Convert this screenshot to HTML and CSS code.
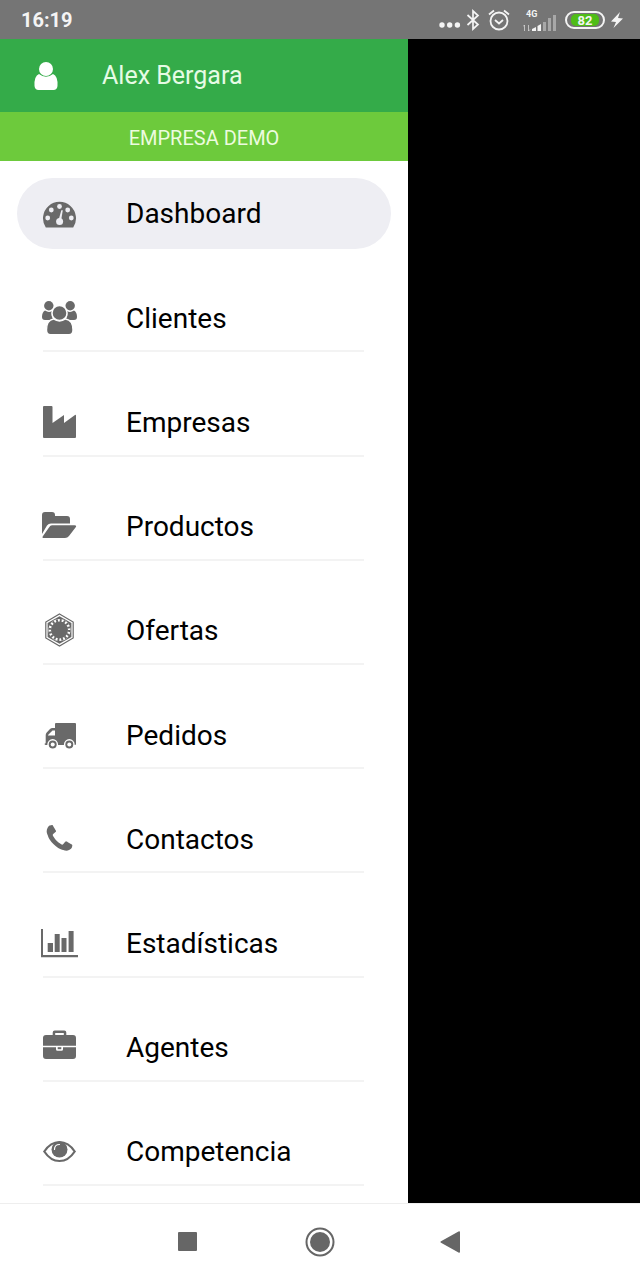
FILE: index.html
```html
<!DOCTYPE html>
<html lang="es">
<head>
<meta charset="utf-8">
<meta name="viewport" content="width=device-width, initial-scale=1">
<title>Menú</title>
<link rel="stylesheet" href="styles.css">
</head>
<body>
<header class="status">
  <time class="clock">16:19</time>
  <div class="status-icons">
    <svg width="22" height="24" viewBox="0 0 22 24" fill="currentColor"><circle cx="3" cy="17" r="2.700"/><circle cx="10.700" cy="17" r="2.700"/><circle cx="18.400" cy="17" r="2.700"/></svg>
    <svg class="ico-bluetooth" width="14" height="24" viewBox="0 0 14 24" fill="none" stroke="currentColor" stroke-width="1.700"><path d="M1.500 7 12 16.500 7 21V3l5 4.500L1.500 17"/></svg>
    <svg class="ico-alarm" width="22" height="24" viewBox="0 0 22 24" fill="none" stroke="currentColor" stroke-width="1.800"><circle cx="11" cy="13" r="8.500"/><path d="M7 12l4 3.500 4-3.500M1 6.500 6 2.500M21 6.500 16 2.500"/></svg>
    <div class="signal">
      <span class="network">4G</span>
      <svg width="34" height="18" viewBox="0 0 34 18" fill="currentColor"><path d="M1.500 17v-6M0 12.500 1.500 11M5.500 11v6M5.500 17 7 15.500" fill="none" stroke="currentColor" opacity=".6"/><path d="M9 17v-2l4-2v4zM14.500 12l3.500-2v7h-3.500z"/><path opacity=".4" d="M20 8h3v9h-3zM25 4h3v13h-3zM30 1h3v16h-3z"/></svg>
    </div>
    <span class="battery"><span class="battery-level">82</span></span>
    <svg width="14" height="18" viewBox="0 0 14 18" fill="currentColor"><path d="M10 1 1 10.500 6 11 3.500 17 13 7.500 8 7z"/></svg>
  </div>
</header>

<main class="screen">
  <aside class="drawer">
    <div class="user">
      <svg width="24" height="30" viewBox="0 0 24 30" fill="currentColor"><circle cx="12" cy="8" r="7"/><path d="M5 13Q0 15 0.500 25q.5 4 4 4h15q3.500 0 4-4Q24 15 19 13q-7 5.500-14 0z"/></svg>
      <span class="user-name">Alex Bergara</span>
    </div>
    <div class="company">EMPRESA DEMO</div>
    <nav class="menu">
      <a class="item active" href="#dashboard"><span class="row">
        <svg class="icon" viewBox="0 0 40 40"><path d="M5.800 33.500A16.500 16.500 0 1 1 33.200 33.500z"/><g class="cut"><circle cx="19.500" cy="12.500" r="2.400"/><circle cx="11.300" cy="16" r="2.400"/><circle cx="27.700" cy="16" r="2.400"/><circle cx="7.700" cy="24" r="2.400"/><circle cx="31.300" cy="24" r="2.400"/><circle cx="19.600" cy="27.500" r="3.500"/><path d="M18.600 26 21.300 16.200h1.500L21 27z"/></g></svg>
        <span class="label">Dashboard</span></span></a>
      <a class="item" href="#clientes"><span class="row">
        <svg class="icon" viewBox="0 0 40 40"><circle cx="8.800" cy="6.800" r="4.700"/><circle cx="30.200" cy="6.800" r="4.700"/><path d="M5 11.500q3.700 2.500 7 .5-1.500 6 2 9H5q-3 0-3-3 0-5 3-6.500zM34 11.500q-3.700 2.500-7 .5 1.500 6-2 9h9q3 0 3-3 0-5-3-6.500z"/><g class="halo"><circle cx="19.500" cy="14" r="7.500"/><path d="M13.500 20q6 4 12 0 7.500 1 7.500 11 0 4.800-4 4.800H10.500q-4 0-4-4.800 0-10 7-11z"/></g></svg>
        <span class="label">Clientes</span></span></a>
      <a class="item" href="#empresas"><span class="row">
        <svg class="icon" viewBox="0 0 40 40"><path d="M4 3h7.500q1 0 1 1v16L24 12v8l11-8q1-.5 1 .8V34q0 1-1 1H4q-1 0-1-1V4q0-1 1-1z"/></svg>
        <span class="label">Empresas</span></span></a>
      <a class="item" href="#productos"><span class="row">
        <svg class="icon" viewBox="0 0 40 40"><path d="M2 27V8q0-3 3-3h7q3 0 3 3v1h12q3 0 3 3v4.500H11q-2.500 0-4 2z"/><path d="M12 18.300h22.500q2.500 0 1.200 2L29 29q-1.500 2-4 2H4q-2.500 0-1-2l6-8.500q1.300-2.200 3-2.200z"/></svg>
        <span class="label">Productos</span></span></a>
      <a class="item" href="#ofertas"><span class="row">
        <svg class="icon" viewBox="0 0 40 40"><path class="line" d="M19.500 3 33.200 11v16L19.500 35 5.800 27V11z"/><path d="M19.500 5.300 31.400 12v14L19.500 32.800 7.600 26V12z"/><circle class="sun-gap" cx="19.500" cy="19" r="11"/><circle class="sun-rays" cx="19.500" cy="19" r="9.500"/><circle cx="19.500" cy="19" r="8.500"/></svg>
        <span class="label">Ofertas</span></span></a>
      <a class="item" href="#pedidos"><span class="row">
        <svg class="icon" viewBox="0 0 40 40"><path fill-rule="evenodd" d="M16 7h19q1 0 1 1v20q0 1-1 1H6q-1.500 0-1.500-1.200 1.200 0 1.200-1.300V19q0-1.500 1-2.500L10 13q1-1 2.500-1H15V8q0-1 1-1zM8 19.500h7v-5h-2.500L8 19z"/><g class="halo"><circle cx="12.700" cy="28.500" r="4.700"/><circle cx="29.300" cy="28.500" r="4.700"/></g><g class="cut"><circle cx="12.700" cy="28.500" r="2"/><circle cx="29.300" cy="28.500" r="2"/></g></svg>
        <span class="label">Pedidos</span></span></a>
      <a class="item" href="#contactos"><span class="row">
        <svg class="icon" viewBox="0 0 40 40"><path transform="translate(3.200 2.700) scale(.0182)" d="M1600 1240q0 27-10 70.500t-21 68.500q-21 50-122 106-94 51-186 51-27 0-53-3.500t-57.500-12.500-47-14.500-55.500-20.500-49-18q-98-35-175-83-127-79-264-216t-216-264q-48-77-83-175-3-9-18-49t-20.500-55.500-14.500-47-12.500-57.500-3.500-53q0-92 51-186 56-101 106-122 25-11 68.500-21t70.500-10q14 0 21 3 18 6 53 76 11 19 30 54t35 63.500 31 53.500q3 4 17.500 25t21.500 35.500 7 28.500q0 20-28.500 50t-62 55-62 53-28.500 46q0 9 5 22.500t8.500 20.500 14 24 11.500 19q76 137 174 235t235 174q2 1 19 11.500t24 14 20.500 8.500 22.500 5q18 0 46-28.500t53-62 55-62 50-28.500q14 0 28.500 7t35.500 21.500 25 17.500q25 15 53.500 31t63.500 35 54 30q70 35 76 53 3 7 3 21z"/></svg>
        <span class="label">Contactos</span></span></a>
      <a class="item" href="#estadisticas"><span class="row">
        <svg class="icon" viewBox="0 0 40 40"><path d="M1 5h2v26h35v2.200H1zM7.700 19H13v9H7.700zM14.700 10h5v18h-5zM21.500 14h5v14h-5zM28.600 7h5v21h-5z"/></svg>
        <span class="label">Estadísticas</span></span></a>
      <a class="item" href="#agentes"><span class="row">
        <svg class="icon" viewBox="0 0 40 40"><path d="M12.700 7V4.500q0-2 2-2h9.600q2 0 2 2V7H33q3 0 3 3v7.700H3V10q0-3 3-3zM15.200 7h8.600V5h-8.600z"/><path d="M3 19.200h13v2q0 1.500 1.500 1.500h4q1.500 0 1.500-1.500v-2h13V28q0 3-3 3H6q-3 0-3-3z"/><path d="M17.700 19.200h3.600v2h-3.600z"/></svg>
        <span class="label">Agentes</span></span></a>
      <a class="item" href="#competencia"><span class="row">
        <svg class="icon" viewBox="0 0 40 40"><path class="eye" d="M4.300 19.500Q10.500 10 19.500 10t15.200 9.500Q28.500 29 19.500 29T4.300 19.500z"/><circle cx="19.500" cy="17.500" r="8"/><path class="glint" d="M14.500 17.500q0-5 5-5"/></svg>
        <span class="label">Competencia</span></span></a>
    </nav>
  </aside>
</main>

<footer class="system-nav">
  <button class="key" type="button" aria-label="Recientes"><svg width="32" height="32" viewBox="0 0 32 32" fill="currentColor"><rect x="5" y="6" width="19" height="19" rx="1"/></svg></button>
  <button class="key" type="button" aria-label="Inicio"><svg width="32" height="32" viewBox="0 0 32 32" fill="currentColor"><circle cx="16" cy="16" r="10"/><circle cx="16" cy="16" r="13.500" fill="none" stroke="currentColor" stroke-width="2"/></svg></button>
  <button class="key" type="button" aria-label="Atrás"><svg width="32" height="32" viewBox="0 0 32 32" fill="currentColor"><path d="M6 15.200 23.500 5.500q1.500-.7 1.500 1v19q0 1.700-1.500 1L6 16.800q-1.500-.8 0-1.600z"/></svg></button>
</footer>
</body>
</html>
```
FILE: styles.css
```css
* { box-sizing: border-box; }

body {
  margin: 0;
  min-height: 100vh;
  display: flex;
  flex-direction: column;
  background: #000;
  color: #000;
  font-family: Roboto, "Noto Sans", sans-serif;
}

svg { display: block; flex: none; }

.status {
  display: flex;
  align-items: center;
  justify-content: space-between;
  height: 39px;
  padding: 0 16px 0 21px;
  background: #757575;
  color: #f4f4f4;
}

.clock { font-size: 20px; font-weight: 700; line-height: 24px; }

.status-icons { display: flex; align-items: center; gap: 5px; }

.ico-bluetooth { margin-right: 3px; }

.ico-alarm { margin-right: 8px; }

.signal { display: flex; flex-direction: column; height: 24px; margin-right: 3px; }

.network {
  height: 6px;
  padding-left: 3px;
  font-size: 9px;
  font-weight: 700;
  line-height: 12px;
}

.battery {
  width: 40px;
  height: 18px;
  padding: 1px 4px;
  border: 2px solid #f4f4f4;
  border-radius: 9px;
}

.battery-level {
  display: block;
  height: 12px;
  border-radius: 5px;
  background: #4fbd17;
  font-size: 13px;
  font-weight: 700;
  line-height: 13px;
  text-align: center;
}

.screen { flex: 1; display: flex; background: #000; }

.drawer {
  display: flex;
  flex-direction: column;
  width: 63.75%;
  background: #fff;
}

.user {
  display: flex;
  align-items: center;
  gap: 44px;
  height: 73px;
  padding: 1px 34px 0;
  background: #34ab49;
  color: #fff;
}

.user-name { color: #e6fbe5; font-size: 25px; line-height: 32px; }

.company {
  height: 49px;
  background: #6dca3c;
  color: #ecfbdf;
  font-size: 20px;
  line-height: 52px;
  text-align: center;
}

.menu { flex: 1; display: grid; grid-auto-rows: 1fr; }

.item {
  --surface: #fff;
  display: flex;
  padding: 17px;
  color: #000;
  text-decoration: none;
}

.row {
  flex: 1;
  display: flex;
  align-items: center;
  gap: 46px;
  min-height: 70px;
  margin: 0 27px 0 26px;
  padding-top: 5px;
  border-bottom: 2px solid #f3f3f3;
}

.active { --surface: #eeeef3; padding-bottom: 16px; }

.active .row {
  margin: 0;
  padding: 1px 27px 0 26px;
  border: 0;
  border-radius: 36px;
  background: var(--surface);
}

.icon {
  width: 40px;
  height: 40px;
  margin-left: -3px;
  fill: #696969;
}

.cut { fill: var(--surface); }

.halo { stroke: var(--surface); stroke-width: 1.4; }

.line { fill: none; stroke: #696969; stroke-width: 1.2; }

.sun-gap { fill: #fff; }

.sun-rays { fill: none; stroke: #696969; stroke-width: 3; stroke-dasharray: 1.9 1.83; }

.eye { fill: none; stroke: #696969; stroke-width: 2.2; }

.glint { fill: none; stroke: #fff; stroke-width: 1.2; stroke-linecap: round; }

.label { font-size: 28px; line-height: 36px; }

.system-nav {
  display: flex;
  align-items: center;
  justify-content: center;
  gap: 87px;
  height: 77px;
  border-top: 1px solid #eee;
  background: #fff;
}

.key {
  display: grid;
  place-items: center;
  width: 44px;
  height: 44px;
  padding: 0;
  border: 0;
  background: none;
  color: #666;
}
```
